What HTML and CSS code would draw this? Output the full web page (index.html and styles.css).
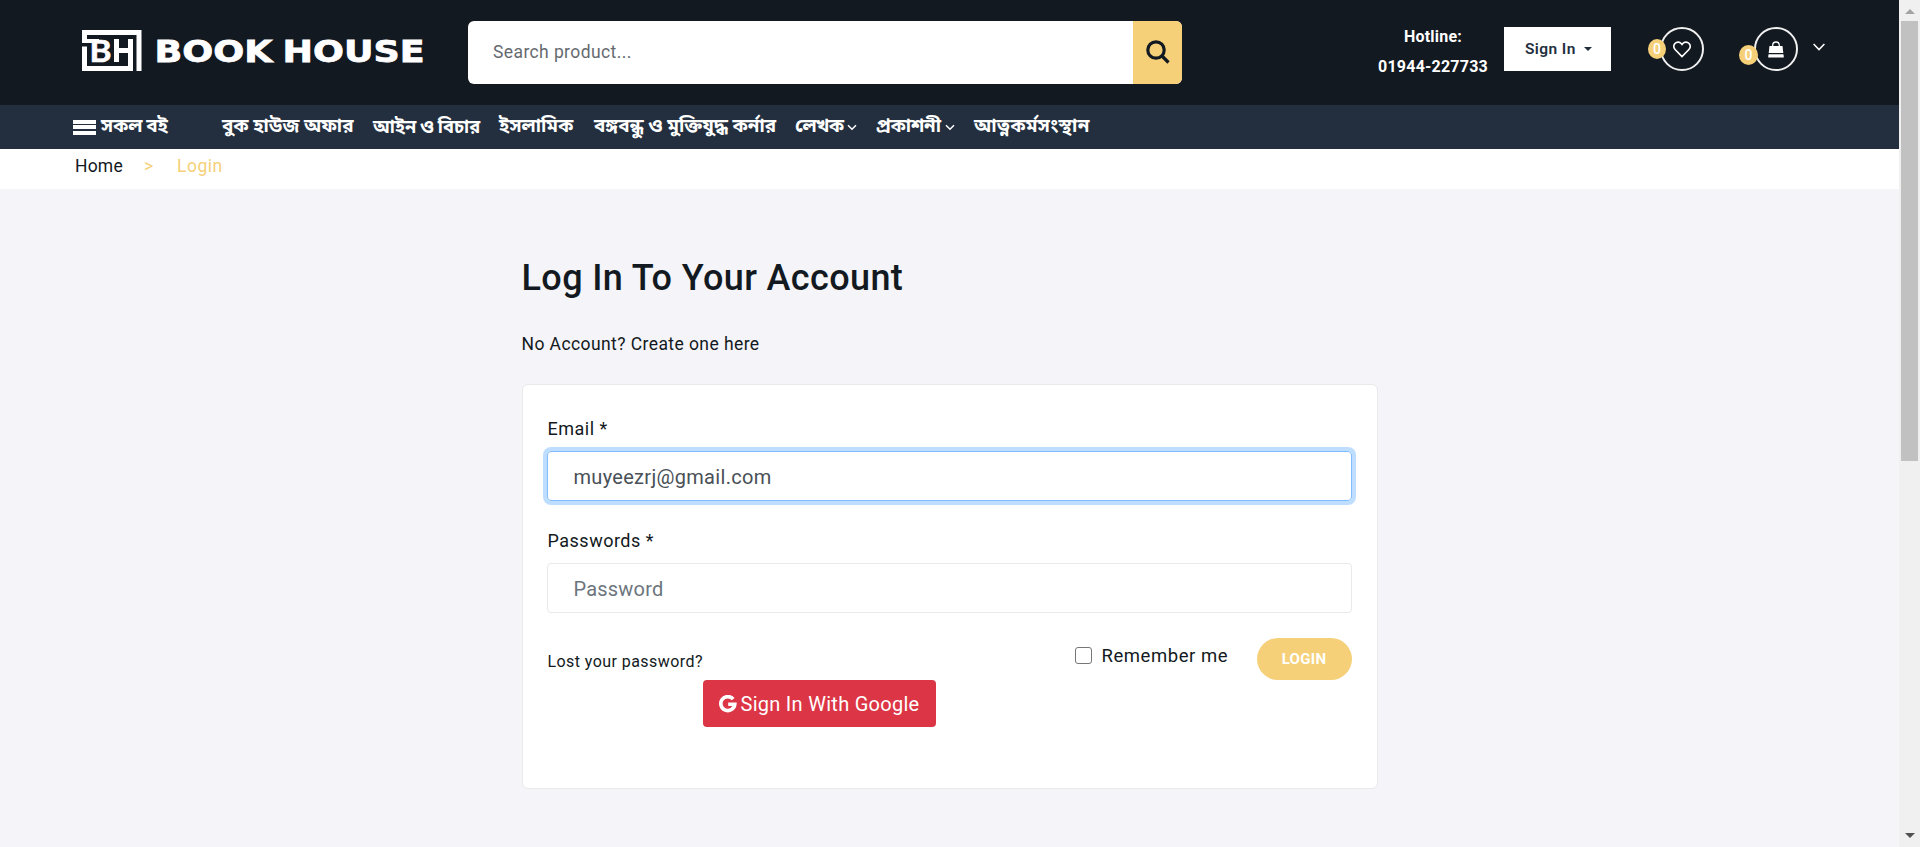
FILE: index.html
```html
<!DOCTYPE html>
<html lang="en">
<head>
<meta charset="utf-8">
<title>Book House - Login</title>
<link rel="stylesheet" href="styles.css">
</head>
<body>
<div class="page">
  <header class="header">
    <a class="logo">
      <svg width="342" height="44" viewBox="0 0 342 44">
        <path d="M0 0h59.500v41h-5V5H5v4h12v4H0z" fill="#fff"/>
        <path d="M0 16.500h5V36h41V31h5v10H0z" fill="#fff"/>
        <path d="M46 9h5v24h-5z" fill="#fff"/>
        <text class="logo-mark" x="7.500" y="32" textLength="22" lengthAdjust="spacingAndGlyphs">B</text>
        <path d="M32 9h5v9h9v5h-9v9h-5z" fill="#fff"/>
        <text class="logo-word" x="72.500" y="32" textLength="118" lengthAdjust="spacingAndGlyphs">BOOK</text>
        <text class="logo-word" x="200.500" y="32" textLength="142" lengthAdjust="spacingAndGlyphs">HOUSE</text>
      </svg>
    </a>
    <form class="search">
      <span class="search-text">Search product...</span>
      <span class="search-btn">
        <svg width="24" height="24" viewBox="0 0 24 24" fill="none" stroke="#131921" stroke-width="3.200"><circle cx="10" cy="10" r="8.200"/><path d="M16 16l6.500 6.500"/></svg>
      </span>
    </form>
    <div class="hotline"><span>Hotline:</span><span>01944-227733</span></div>
    <div class="signin"><span>Sign In</span><i class="caret"></i></div>
    <div class="ring heart">
      <svg width="18" height="17" viewBox="0 0 18 17" fill="none" stroke="#fff" stroke-width="1.600"><path d="M9 15.600L2.300 8.700C.6 6.900.5 4.200 1.900 2.500 3.700.6 6.700.7 8.200 2.500L9 3.500l.8-1c1.500-1.800 4.500-1.900 6.300 0 1.400 1.700 1.300 4.400-.4 6.200z"/></svg>
      <b class="badge">0</b>
    </div>
    <div class="ring cart">
      <svg width="16" height="17" viewBox="0 0 16 17"><path d="M4.700 7V4.300C4.700 2.300 6 1 8 1s3.300 1.300 3.300 3.300V7" fill="none" stroke="#fff" stroke-width="1.300"/><path d="M1.500 5h13l.8 7H.7z" fill="#fff"/><path d="M.5 13.200h15l.3 3.300H.2z" fill="#fff"/></svg>
      <b class="badge low">0</b>
    </div>
    <svg class="chev" width="12" height="8" viewBox="0 0 12 8" fill="none" stroke="#fff" stroke-width="1.500"><path d="M.6 1L6 6.600 11.400 1"/></svg>
  </header>

  <nav class="nav">
    <a class="all"><i class="bars"></i><span>সকল বই</span></a>
    <a class="n1">বুক হাউজ অফার</a>
    <a class="n2">আইন ও বিচার</a>
    <a class="n3">ইসলামিক</a>
    <a class="n4">বঙ্গবন্ধু ও মুক্তিযুদ্ধ কর্নার</a>
    <a class="n5"><span>লেখক</span><svg width="10" height="7" viewBox="0 0 10 7"><path d="M1 1.200l4 4 4-4"/></svg></a>
    <a class="n6"><span>প্রকাশনী</span><svg width="10" height="7" viewBox="0 0 10 7"><path d="M1 1.200l4 4 4-4"/></svg></a>
    <a class="n7">আত্নকর্মসংস্থান</a>
  </nav>

  <div class="crumbs"><a class="home">Home</a><span class="sep">&gt;</span><span class="here">Login</span></div>

  <main class="main">
    <h1>Log In To Your Account</h1>
    <p class="create">No Account? Create one here</p>
    <form class="card">
      <label>Email *</label>
      <div class="field focus">muyeezrj@gmail.com</div>
      <label>Passwords *</label>
      <div class="field hint">Password</div>
      <div class="actions">
        <a class="lost">Lost your password?</a>
        <i class="check"></i>
        <span class="remember">Remember me</span>
        <span class="login">LOGIN</span>
      </div>
      <a class="google">
        <svg width="18" height="18" viewBox="0 0 18 18" fill="none" stroke="#fff" stroke-width="3.600"><path d="M14.200 4.100A7 7 0 1 0 15.800 9.300H9.200"/></svg>
        <span>Sign In With Google</span>
      </a>
    </form>
  </main>
</div>
<aside class="scrollbar"><i class="up"></i><i class="thumb"></i><i class="down"></i></aside>
</body>
</html>
```

FILE: styles.css
```css
* { box-sizing: border-box; }
body {
  margin: 0;
  height: 847px;
  overflow: hidden;
  display: flex;
  font-family: Roboto, "Noto Sans Bengali", "Noto Sans", sans-serif;
  color: #131921;
  background: #f4f4f9;
}
.page { width: 1899px; }

/* top bar */
.header {
  height: 105px;
  background: #131921;
  display: flex;
  align-items: flex-start;
}
.logo { margin: 30px 0 0 82px; width: 386px; }
.logo svg { display: block; }
.logo text { fill: #fff; stroke: #fff; font-weight: 700; }
.logo-mark { font-family: Lato, sans-serif; font-size: 30px; stroke-width: .6; }
.logo-word { font-family: "DejaVu Sans", sans-serif; font-size: 31px; stroke-width: .8; }
.search { margin-top: 21px; width: 714px; height: 63px; display: flex; border-radius: 6px; overflow: hidden; background: #fff; }
.search-text { flex: 1; padding-left: 25px; line-height: 62px; font-size: 17.5px; letter-spacing: .4px; color: #666a6f; }
.search-btn { width: 49px; background: #f5d078; padding: 19px 0 0 13px; }
.hotline { width: 120px; margin: 22px 0 0 191px; display: flex; flex-direction: column; align-items: center; font-size: 16px; font-weight: 700; letter-spacing: .22px; line-height: 30px; color: #fff; white-space: nowrap; }
.signin { margin: 27px 0 0 11px; width: 107px; height: 44px; background: #fff; display: flex; align-items: center; padding-left: 21px; font-size: 15.5px; font-weight: 600; letter-spacing: .4px; color: #232f3e; }
.caret { border: 4px solid transparent; border-top-color: #232f3e; border-bottom: 0; margin-left: 8px; }
.ring { position: relative; width: 44px; height: 44px; margin-top: 27px; border: 2px solid #f0f0f0; border-radius: 50%; display: flex; justify-content: center; align-items: center; }
.heart { margin-left: 49px; }
.cart { margin-left: 50px; }
.badge { position: absolute; left: -14px; top: 10px; width: 18px; height: 20px; border-radius: 50%; background: #f5d078; color: #fff; font-size: 14px; line-height: 20px; font-weight: 500; text-align: center; }
.badge.low { left: -17px; top: 16px; width: 19px; }
.chev { margin: 43px 0 0 15px; }

/* category bar */
.nav { height: 44px; background: #232f3e; display: flex; align-items: center; padding: 1px 0 0 73px; color: #fff; font-weight: 700; font-size: 18.8px; }
.nav a { display: flex; align-items: center; white-space: nowrap; }
.nav svg { fill: none; stroke: #fff; stroke-width: 1.5; margin-left: 4px; }
.all { width: 149px; word-spacing: -1px; }
.bars { width: 23px; height: 15px; margin-right: 5px; background: linear-gradient(#fff 0 4px, transparent 4px 5.5px, #fff 5.5px 9.5px, transparent 9.5px 11px, #fff 11px); }
.n1 { width: 151px; }
.n2 { width: 126px; font-size: 18.2px; word-spacing: -.7px; }
.n3 { width: 95px; }
.n4 { width: 201px; }
.n5 { width: 81px; }
.n5 span { letter-spacing: -.7px; }
.n6 { width: 98px; }
.n6 span { letter-spacing: -.2px; }
.n7 { letter-spacing: .3px; }

.crumbs { height: 40px; background: #fff; display: flex; padding-left: 75px; line-height: 34px; font-size: 17.5px; letter-spacing: .2px; }
.home { width: 69px; }
.sep { width: 33px; color: #f5d078; }
.here { color: #f5d078; letter-spacing: .5px; }

/* login form */
.main { width: 856px; margin-left: 521.5px; padding-top: 67px; }
h1 { margin: 0; font-size: 36px; font-weight: 500; letter-spacing: .38px; line-height: 44px; }
.create { margin: 30px 0 0; font-size: 17.5px; letter-spacing: .42px; line-height: 28px; }
.card { margin-top: 26px; height: 405px; background: #fff; border: 1px solid #e9e9ec; border-radius: 6px; padding: 30px 24px 0; }
label { display: block; font-size: 18px; letter-spacing: .5px; line-height: 28px; height: 36px; padding-left: 1px; }
.field { width: 805px; height: 50px; border: 1px solid #e9e9ec; border-radius: 4px; padding-left: 26px; font-size: 20px; letter-spacing: .3px; line-height: 50px; color: #495057; }
.field + label { margin-top: 26px; }
.focus { border-color: #80bdff; box-shadow: 0 0 0 4px #bfdeff; }
.hint { color: #6c757d; letter-spacing: .2px; }
.actions { display: flex; height: 42px; margin-top: 25px; }
.lost { width: 528px; padding-left: 1px; font-size: 16px; letter-spacing: .43px; line-height: 47px; }
.check { width: 17px; height: 17px; margin: 9px 10px 0 0; border: 1.500px solid #767676; border-radius: 3px; }
.remember { width: 155px; font-size: 18.5px; letter-spacing: .55px; line-height: 37px; }
.login { width: 95px; border-radius: 21px; background: #f5d078; color: #fff; text-align: center; font-size: 15px; font-weight: 700; letter-spacing: .3px; line-height: 42px; }
.google { width: 233px; height: 47px; margin-left: 156px; border-radius: 4px; background: #dc3545; color: #fff; display: flex; align-items: center; padding-left: 16px; font-size: 20px; letter-spacing: .28px; }
.google svg { margin-right: 4px; }

/* window scrollbar */
.scrollbar { width: 21px; background: #f0f0f0; display: flex; flex-direction: column; align-items: center; }
.up { margin-top: 9px; border: 5px solid transparent; border-top: 0; border-bottom-color: #a3a3a3; }
.thumb { width: 17px; height: 440px; margin-top: 7px; background: #c1c1c1; }
.down { margin-top: auto; margin-bottom: 9px; border: 5px solid transparent; border-bottom: 0; border-top-color: #505050; }
```
